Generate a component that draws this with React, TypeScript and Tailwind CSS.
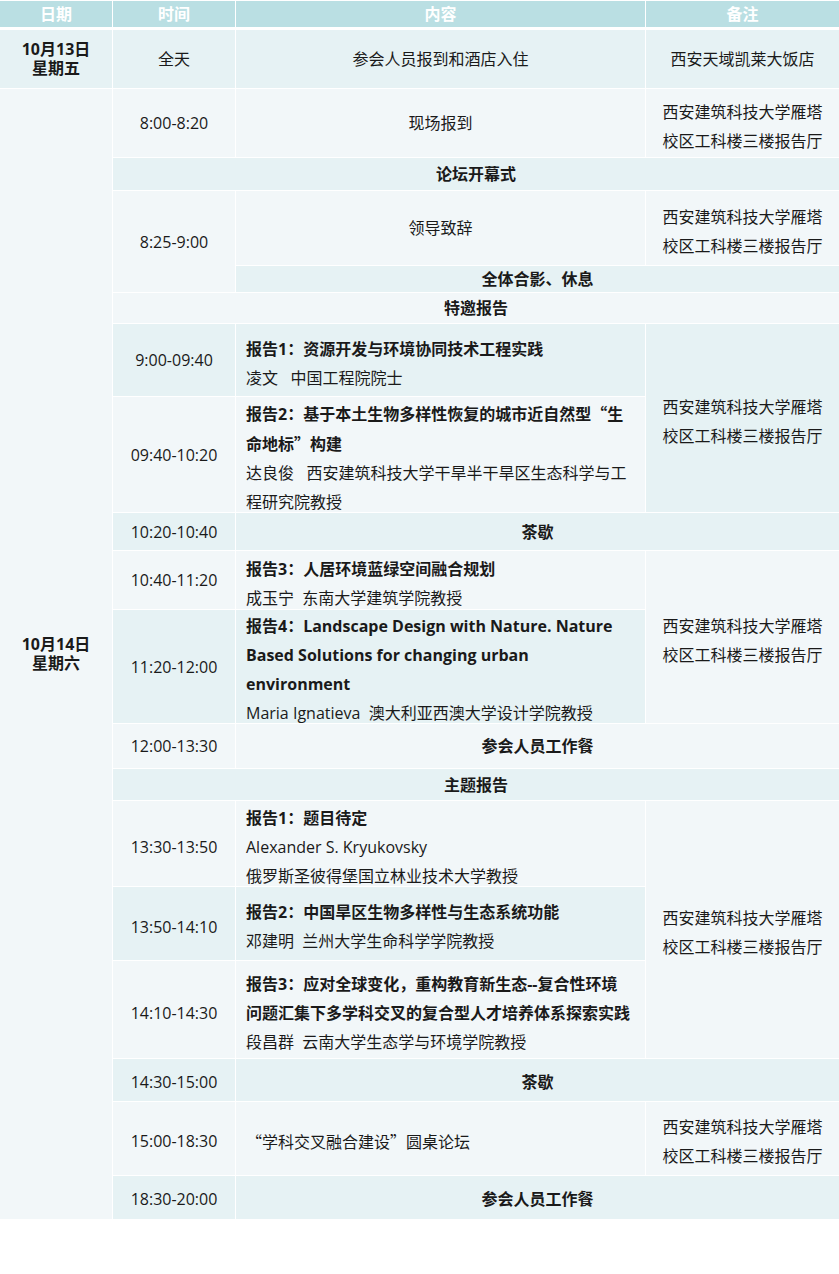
import React from "react";

const D = "bg-[#e6f2f4]";
const L = "bg-[#f2f7f9]";

function C({
  className = "",
  children,
}: {
  className?: string;
  children?: React.ReactNode;
}) {
  return (
    <div className={`flex items-center justify-center text-center ${className}`}>
      {children}
    </div>
  );
}

function Txt({
  className = "",
  children,
}: {
  className?: string;
  children?: React.ReactNode;
}) {
  return (
    <div className={`flex flex-col justify-center px-[10px] pt-[7px] leading-[29px] whitespace-nowrap ${className}`}>
      {children}
    </div>
  );
}

function Q({ children }: { children: React.ReactNode }) {
  return <span className="font-['Noto_Sans_CJK_SC',sans-serif]">{children}</span>;
}

function Notes() {
  return (
    <div className="leading-[29px] pt-[7px]">
      西安建筑科技大学雁塔
      <br />
      校区工科楼三楼报告厅
    </div>
  );
}

export default function App() {
  return (
    <div
      lang="zh-CN"
      className="w-[839px] min-h-[1274px] bg-white pt-px font-['Open_Sans','Noto_Sans_CJK_SC',sans-serif] text-[16px] text-[#1a1a1a]"
    >
      <div className="grid grid-cols-[112px_122px_409px_193px] gap-x-px h-[26px] mb-[3px]">
        {["日期", "时间", "内容", "备注"].map((h) => (
          <div
            key={h}
            className="bg-[#badfe3] text-white font-bold flex items-center justify-center"
          >
            {h}
          </div>
        ))}
      </div>

      <div className="grid grid-cols-[112px_122px_409px_193px] grid-rows-[58px_68px_32px_74px_26px_30px_72px_115px_37px_58px_113px_44px_31px_85px_73px_97px_42px_73px_43px] gap-px">
        {/* row 1 */}
        <C className={`${D} row-start-1 col-start-1 font-bold`}>
          <div className="flex flex-col items-center">
            <div className="leading-[19px]">10月13日</div>
            <div className="leading-[19px]">星期五</div>
          </div>
        </C>
        <C className={`${D} row-start-1 col-start-2`}>全天</C>
        <C className={`${D} row-start-1 col-start-3`}>参会人员报到和酒店入住</C>
        <C className={`${D} row-start-1 col-start-4`}>西安天域凯莱大饭店</C>

        {/* date 10/14 */}
        <C className={`${L} row-start-2 row-span-18 col-start-1 font-bold`}>
          <div className="flex flex-col items-center">
            <div className="leading-[19px]">10月14日</div>
            <div className="leading-[19px]">星期六</div>
          </div>
        </C>

        {/* row 2 */}
        <C className={`${L} row-start-2 col-start-2`}>8:00-8:20</C>
        <C className={`${L} row-start-2 col-start-3`}>现场报到</C>
        <C className={`${L} row-start-2 col-start-4`}>
          <Notes />
        </C>

        {/* row 3 */}
        <C className={`${D} row-start-3 col-start-2 col-span-3 font-bold`}>论坛开幕式</C>

        {/* rows 4-5 */}
        <C className={`${L} row-start-4 row-span-2 col-start-2`}>8:25-9:00</C>
        <C className={`${L} row-start-4 col-start-3`}>领导致辞</C>
        <C className={`${L} row-start-4 col-start-4`}>
          <Notes />
        </C>
        <C className={`${D} row-start-5 col-start-3 col-span-2 font-bold`}>全体合影、休息</C>

        {/* row 6 */}
        <C className={`${L} row-start-6 col-start-2 col-span-3 font-bold`}>特邀报告</C>

        {/* row 7 */}
        <C className={`${D} row-start-7 col-start-2`}>9:00-09:40</C>
        <Txt className={`${D} row-start-7 col-start-3`}>
          <div className="font-bold">报告1：资源开发与环境协同技术工程实践</div>
          <div>凌文&nbsp;&nbsp;&nbsp;中国工程院院士</div>
        </Txt>
        <C className={`${D} row-start-7 row-span-2 col-start-4`}>
          <Notes />
        </C>

        {/* row 8 */}
        <C className={`${L} row-start-8 col-start-2`}>09:40-10:20</C>
        <Txt className={`${L} row-start-8 col-start-3 pt-[3px]`}>
          <div className="font-bold">
            报告2：基于本土生物多样性恢复的城市近自然型<Q>“</Q>生
          </div>
          <div className="font-bold">
            命地标<Q>”</Q>构建
          </div>
          <div>达良俊&nbsp;&nbsp;&nbsp;西安建筑科技大学干旱半干旱区生态科学与工</div>
          <div>程研究院教授</div>
        </Txt>

        {/* row 9 */}
        <C className={`${D} row-start-9 col-start-2`}>10:20-10:40</C>
        <C className={`${D} row-start-9 col-start-3 col-span-2 font-bold`}>茶歇</C>

        {/* row 10 */}
        <C className={`${L} row-start-10 col-start-2`}>10:40-11:20</C>
        <Txt className={`${L} row-start-10 col-start-3`}>
          <div className="font-bold">报告3：人居环境蓝绿空间融合规划</div>
          <div>成玉宁&nbsp;&nbsp;东南大学建筑学院教授</div>
        </Txt>
        <C className={`${L} row-start-10 row-span-2 col-start-4`}>
          <Notes />
        </C>

        {/* row 11 */}
        <C className={`${D} row-start-11 col-start-2`}>11:20-12:00</C>
        <Txt className={`${D} row-start-11 col-start-3`}>
          <div className="font-bold">报告4：Landscape Design with Nature. Nature</div>
          <div className="font-bold">Based Solutions for changing urban</div>
          <div className="font-bold">environment</div>
          <div>Maria Ignatieva&nbsp;&nbsp;澳大利亚西澳大学设计学院教授</div>
        </Txt>

        {/* row 12 */}
        <C className={`${L} row-start-12 col-start-2`}>12:00-13:30</C>
        <C className={`${L} row-start-12 col-start-3 col-span-2 font-bold`}>参会人员工作餐</C>

        {/* row 13 */}
        <C className={`${D} row-start-13 col-start-2 col-span-3 font-bold`}>主题报告</C>

        {/* row 14 */}
        <C className={`${L} row-start-14 col-start-2 pt-[7px]`}>13:30-13:50</C>
        <Txt className={`${L} row-start-14 col-start-3`}>
          <div className="font-bold">报告1：题目待定</div>
          <div>Alexander S. Kryukovsky</div>
          <div>俄罗斯圣彼得堡国立林业技术大学教授</div>
        </Txt>
        <C className={`${L} row-start-14 row-span-3 col-start-4`}>
          <Notes />
        </C>

        {/* row 15 */}
        <C className={`${D} row-start-15 col-start-2 pt-[6px]`}>13:50-14:10</C>
        <Txt className={`${D} row-start-15 col-start-3`}>
          <div className="font-bold">报告2：中国旱区生物多样性与生态系统功能</div>
          <div>邓建明&nbsp;&nbsp;兰州大学生命科学学院教授</div>
        </Txt>

        {/* row 16 */}
        <C className={`${L} row-start-16 col-start-2 pt-[7px]`}>14:10-14:30</C>
        <Txt className={`${L} row-start-16 col-start-3`}>
          <div className="font-bold">报告3：应对全球变化，重构教育新生态--复合性环境</div>
          <div className="font-bold">问题汇集下多学科交叉的复合型人才培养体系探索实践</div>
          <div>段昌群&nbsp;&nbsp;云南大学生态学与环境学院教授</div>
        </Txt>

        {/* row 17 */}
        <C className={`${D} row-start-17 col-start-2 pt-[4px]`}>14:30-15:00</C>
        <C className={`${D} row-start-17 col-start-3 col-span-2 font-bold pt-[4px]`}>茶歇</C>

        {/* row 18 */}
        <C className={`${L} row-start-18 col-start-2 pt-[4px]`}>15:00-18:30</C>
        <Txt className={`${L} row-start-18 col-start-3 pt-0`}>
          <div>
            <Q>“</Q>学科交叉融合建设<Q>”</Q>圆桌论坛
          </div>
        </Txt>
        <C className={`${L} row-start-18 col-start-4`}>
          <Notes />
        </C>

        {/* row 19 */}
        <C className={`${D} row-start-19 col-start-2 pt-[2px]`}>18:30-20:00</C>
        <C className={`${D} row-start-19 col-start-3 col-span-2 font-bold pt-[2px]`}>参会人员工作餐</C>
      </div>
    </div>
  );
}
